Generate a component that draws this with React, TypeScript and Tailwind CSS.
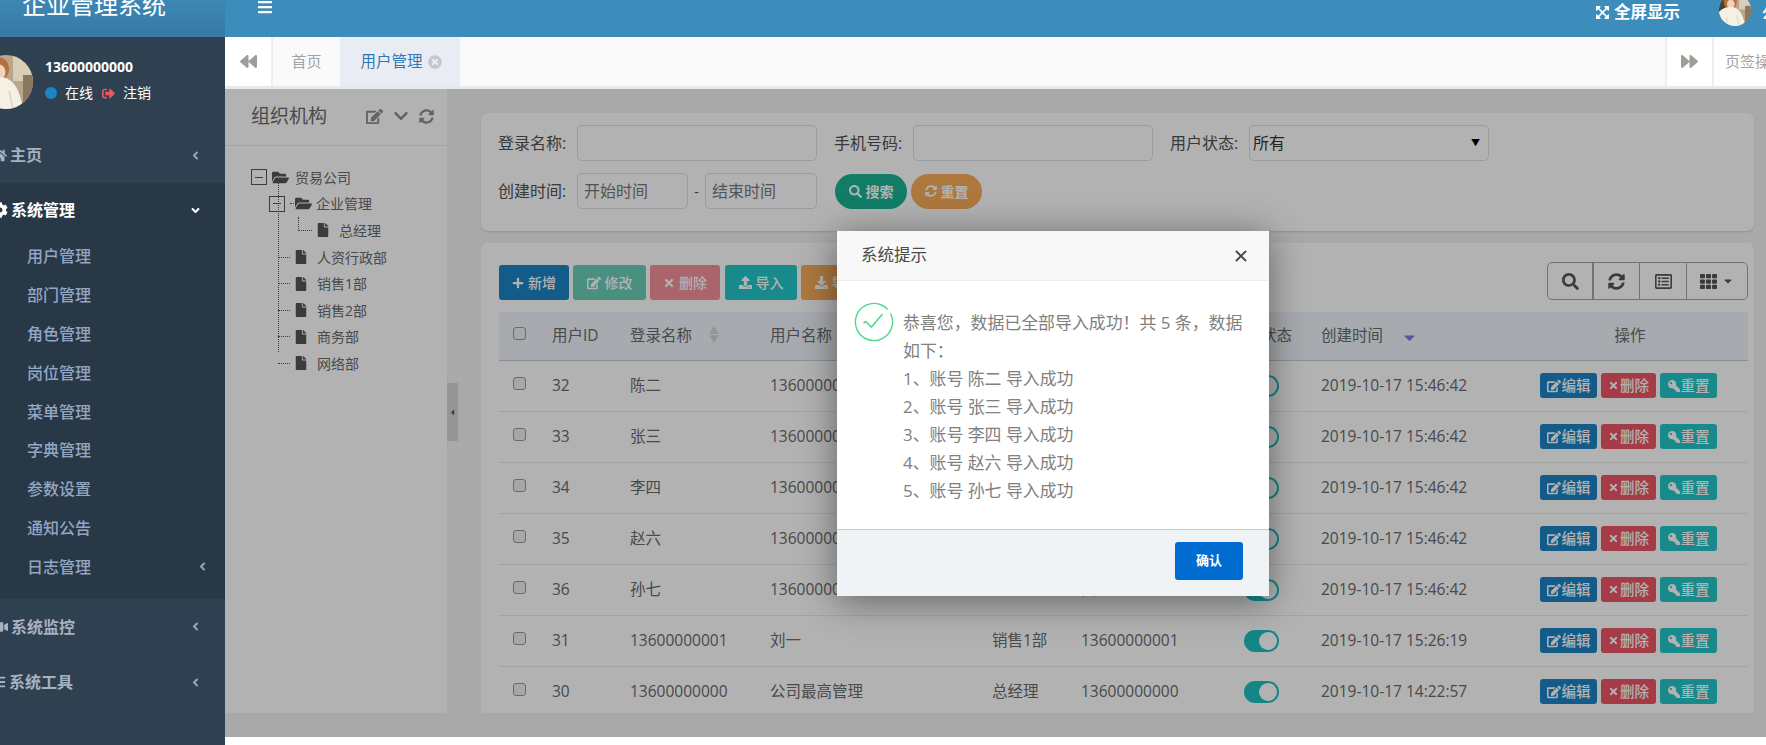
import {
  FaAngleDown,
  FaAngleLeft,
  FaBackward,
  FaBars,
  FaCaretDown,
  FaCaretLeft,
  FaChevronDown,
  FaCog,
  FaDownload,
  FaEdit,
  FaExpandArrowsAlt,
  FaFile,
  FaFolderOpen,
  FaForward,
  FaHome,
  FaKey,
  FaPlus,
  FaRegListAlt,
  FaSearch,
  FaSignOutAlt,
  FaSyncAlt,
  FaTh,
  FaTimes,
  FaTimesCircle,
  FaUpload,
  FaVideo,
} from 'react-icons/fa';

const subMenus = ['用户管理', '部门管理', '角色管理', '岗位管理', '菜单管理', '字典管理', '参数设置', '通知公告', '日志管理'];

const rows = [
  { id: 32, login: '陈二', name: '13600000002', dept: '', phone: '', time: '2019-10-17 15:46:42' },
  { id: 33, login: '张三', name: '13600000003', dept: '', phone: '', time: '2019-10-17 15:46:42' },
  { id: 34, login: '李四', name: '13600000004', dept: '', phone: '', time: '2019-10-17 15:46:42' },
  { id: 35, login: '赵六', name: '13600000005', dept: '', phone: '', time: '2019-10-17 15:46:42' },
  { id: 36, login: '孙七', name: '13600000006', dept: '', phone: '贝', time: '2019-10-17 15:46:42' },
  { id: 31, login: '13600000001', name: '刘一', dept: '销售1部', phone: '13600000001', time: '2019-10-17 15:26:19' },
  { id: 30, login: '13600000000', name: '公司最高管理', dept: '总经理', phone: '13600000000', time: '2019-10-17 14:22:57' },
];

const results = ['1、账号 陈二 导入成功', '2、账号 张三 导入成功', '3、账号 李四 导入成功', '4、账号 赵六 导入成功', '5、账号 孙七 导入成功'];

function Avatar({ size }: { size: string }) {
  return (
    <svg viewBox="0 0 54 54" className={`${size} shrink-0 rounded-full`}>
      <rect width="54" height="54" fill="#b9a68c" />
      <rect width="12" height="30" fill="#4e3d33" />
      <rect x="34" width="20" height="26" fill="#d9cdb6" />
      <rect x="44" y="20" width="10" height="34" fill="#8b765f" />
      <ellipse cx="19" cy="14" rx="11" ry="12" fill="#b2703f" />
      <ellipse cx="20" cy="17" rx="6.5" ry="7.5" fill="#f2d2bb" />
      <path d="M0 54V30c6-6 12-8 20-8 12 0 20 8 24 32z" fill="#f5f0e4" />
      <path d="M30 36l4 18M14 40l-2 14" stroke="#dcd3c0" strokeWidth="1.5" fill="none" />
    </svg>
  );
}

function MenuItem({ icon, label, active, offset }: { icon: React.ReactNode; label: string; active?: boolean; offset: string }) {
  return (
    <div className={`flex h-full items-center justify-between pr-[23px] text-[16px] font-semibold ${active ? 'text-white' : 'text-[#a7b1c2]'}`}>
      <span className={`flex items-center gap-[3px] ${offset}`}>
        {icon}
        {label}
      </span>
      {active ? <FaAngleDown className="text-[13px]" /> : <FaAngleLeft className="text-[13px] text-[#8ea4c4]" />}
    </div>
  );
}

function Sidebar() {
  return (
    <aside className="flex w-[225px] shrink-0 flex-col overflow-hidden bg-[#2f4050]">
      <div className="flex h-[37px] items-end overflow-hidden bg-linear-to-b from-[#3d87b5] to-[#367aa5] pl-[22px] pb-[16px] text-[24px] leading-[32px] text-white">
        <span className="whitespace-nowrap">企业管理系统</span>
      </div>
      <div className="flex h-[94px] items-center gap-[12px] -ml-[21px] pb-[8px]">
        <Avatar size="h-[54px] w-[54px] mt-[4px]" />
        <div>
          <div className="text-[14px] font-bold leading-[20px] text-white">13600000000</div>
          <div className="mt-[6px] flex items-center text-[14px] leading-[20px] text-white">
            <span className="mr-[8px] h-[12px] w-[12px] rounded-full bg-[#1c84c6]" />
            在线
            <FaSignOutAlt className="ml-[9px] mr-[8px] text-[13px] text-[#ed5565]" />
            注销
          </div>
        </div>
      </div>
      <div className="h-[52px] pb-[4px]">
        <MenuItem icon={<FaHome className="text-[15px]" />} label="主页" offset="-ml-[8px]" />
      </div>
      <div className="h-[416px] bg-[#293846]">
        <div className="h-[54px]">
          <MenuItem icon={<FaCog className="text-[16px]" />} label="系统管理" active offset="-ml-[8px]" />
        </div>
        {subMenus.map((m, i) => (
          <div key={m} className="flex h-[38.8px] items-center justify-between pl-[27px] pr-[16px] text-[16px] font-medium text-[#93a6c4]">
            {m}
            {i === 8 && <FaAngleLeft className="text-[13px] text-[#8ea4c4]" />}
          </div>
        ))}
      </div>
      <div className="h-[55px]">
        <MenuItem icon={<FaVideo className="text-[14px]" />} label="系统监控" offset="-ml-[6px]" />
      </div>
      <div className="h-[56px]">
        <MenuItem icon={<FaBars className="text-[14px]" />} label="系统工具" offset="-ml-[8px]" />
      </div>
    </aside>
  );
}

function TopBar() {
  return (
    <div className="flex h-[37px] shrink-0 items-start justify-between overflow-hidden bg-[#3c8dbc] text-white">
      <FaBars className="ml-[32px] mt-[-1px] text-[16px]" />
      <div className="flex items-start">
        <span className="mt-[2px] flex items-center gap-[4px] text-[16.5px] font-bold leading-[20px]">
          <FaExpandArrowsAlt className="text-[15px]" />
          全屏显示
        </span>
        <span className="ml-[39px] mt-[-6px]">
          <Avatar size="h-[32px] w-[32px]" />
        </span>
        <span className="ml-[11px] w-[4px] overflow-hidden whitespace-nowrap text-[14px] font-bold leading-[20px] mt-[3px]">公司</span>
      </div>
    </div>
  );
}

function TabBar() {
  return (
    <div className="flex h-[52px] shrink-0 border-b-[3px] border-[#e7eaec] bg-[#fafafa] text-[15px]">
      <div className="flex w-[48px] items-center justify-center border-r-2 border-[#eceef1] bg-white text-[17px] text-[#a09c98]">
        <FaBackward />
      </div>
      <div className="flex w-[67px] items-center justify-center text-[#a3a3a3]">首页</div>
      <div className="flex w-[120px] items-center justify-center gap-[5px] bg-[#e9edf3] pl-[2px] text-[15.5px] text-[#2f78b7]">
        用户管理
        <FaTimesCircle className="text-[14px] text-[#c4c8cd]" />
      </div>
      <div className="flex-1" />
      <div className="flex w-[49px] items-center justify-center border-x-2 border-[#eceef1] bg-white text-[17px] text-[#a09c98]">
        <FaForward />
      </div>
      <div className="flex w-[52px] items-center overflow-hidden whitespace-nowrap bg-white pl-[11px] text-[#a3a3a3]">页签操作</div>
    </div>
  );
}

function TreeRow({ pl, kind, label, connector, dash }: { pl: string; kind: 'root' | 'branch' | 'leaf'; label: string; connector?: string; dash?: boolean }) {
  return (
    <div className={`flex h-[26.6px] items-center text-[14px] text-[#676a6c] ${pl}`}>
      {connector && <span className={`mr-[4px] block border-dotted border-[#555] ${connector}`} />}
      {kind !== 'leaf' && (
        <span className="mr-[5px] flex h-[16px] w-[16px] items-center justify-center border border-[#555]">
          <span className="h-[1px] w-[8px] bg-[#555]" />
        </span>
      )}
      {dash && <span className="mr-[1px] w-[4px] border-t border-dotted border-[#555]" />}
      {kind === 'leaf' ? <FaFile className="mr-[9px] text-[14px] text-[#555]" /> : <FaFolderOpen className={`text-[17px] text-[#555] ${dash ? 'mr-[4px]' : 'mr-[6px]'}`} />}
      {label}
    </div>
  );
}

function OrgPanel() {
  return (
    <div className="flex h-[624px] w-[222px] shrink-0 flex-col bg-white">
      <div className="flex h-[57px] shrink-0 items-center justify-between border-b border-[#e7eaec] pb-[2px] pl-[26px] pr-[13px] text-[#8c8f92]">
        <span className="text-[19px] text-[#676a6c]">组织机构</span>
        <span className="flex items-center gap-[10px] text-[16px]">
          <FaEdit className="text-[17px]" />
          <FaChevronDown />
          <FaSyncAlt className="text-[15px]" />
        </span>
      </div>
      <div className="relative mt-[18px]">
        <span className="absolute left-[53px] top-[16px] h-[172px] border-l border-dotted border-[#555]" />
        <TreeRow pl="pl-[26px]" kind="root" label="贸易公司" />
        <TreeRow pl="pl-[44px]" kind="branch" label="企业管理" dash />
        <TreeRow pl="pl-[73px]" kind="leaf" label="总经理" connector="h-[14px] w-[14px] border-l border-b -mt-[12px]" />
        {['人资行政部', '销售1部', '销售2部', '商务部', '网络部'].map((d) => (
          <TreeRow key={d} pl="pl-[53px]" kind="leaf" label={d} connector="w-[12px] border-t" />
        ))}
      </div>
    </div>
  );
}

function Field({ label, children }: { label: string; children: React.ReactNode }) {
  return (
    <div className="flex items-center">
      <label className="w-[79px] shrink-0 whitespace-nowrap text-[16px] text-[#4f5254]">{label}</label>
      {children}
    </div>
  );
}

const inputClass = 'h-[36px] rounded-[5px] border border-[#dcdfe2] bg-white px-[6px] text-[16px] text-[#555] outline-none placeholder:text-[#777]';

function SearchCard() {
  return (
    <div className="h-[118px] rounded-[7px] bg-white pl-[17px] pt-[12px] shadow-[0_1px_2px_rgba(0,0,0,0.15)]">
      <div className="flex gap-[17px]">
        <Field label="登录名称:">
          <input className={`${inputClass} w-[240px]`} />
        </Field>
        <Field label="手机号码:">
          <input className={`${inputClass} w-[240px]`} />
        </Field>
        <Field label="用户状态:">
          <div className="flex h-[36px] w-[240px] items-center justify-between rounded-[5px] border border-[#dcdfe2] bg-white pl-[3px] pr-[8px] text-[16px] text-[#333]">
            所有
            <span className="text-[9px] text-black">▼</span>
          </div>
        </Field>
      </div>
      <div className="mt-[12px] flex items-center">
        <Field label="创建时间:">
          <input className={`${inputClass} w-[111px]`} placeholder="开始时间" />
        </Field>
        <span className="w-[17px] text-center text-[14px] text-[#555]">-</span>
        <input className={`${inputClass} w-[112px]`} placeholder="结束时间" />
        <button className="ml-[18px] flex h-[35px] w-[72px] items-center justify-center gap-[4px] rounded-full bg-[#1ab394] text-[14px] font-semibold text-white">
          <FaSearch className="text-[13px]" />
          搜索
        </button>
        <button className="ml-[4px] flex h-[35px] w-[71px] items-center justify-center gap-[4px] rounded-full bg-[#f8ac59] text-[14px] font-semibold text-white">
          <FaSyncAlt className="text-[12px]" />
          重置
        </button>
      </div>
    </div>
  );
}

function ToolButton({ icon, label, color, width }: { icon: React.ReactNode; label: string; color: string; width: string }) {
  return (
    <button className={`flex h-[35px] items-center justify-center gap-[4px] rounded-[3px] text-[14px] font-medium text-white ${color} ${width}`}>
      {icon}
      {label}
    </button>
  );
}

function RowAction({ icon, label, color, width }: { icon: React.ReactNode; label: string; color: string; width: string }) {
  return (
    <span className={`flex h-[25px] items-center justify-center gap-[1px] rounded-[3px] text-[14.5px] font-medium text-white ${color} ${width}`}>
      {icon}
      {label}
    </span>
  );
}

function Checkbox() {
  return <span className="-mt-[5px] block h-[13px] w-[13px] rounded-[3px] border border-[#999] bg-[#efefef]" />;
}

function UserTable() {
  return (
    <table className="w-[1249px] table-fixed text-[15.5px] text-[#676a6c]">
      <colgroup>
        <col className="w-[43px]" />
        <col className="w-[78px]" />
        <col className="w-[140px]" />
        <col className="w-[222px]" />
        <col className="w-[89px]" />
        <col className="w-[163px]" />
        <col className="w-[77px]" />
        <col className="w-[219px]" />
        <col className="w-[218px]" />
      </colgroup>
      <thead>
        <tr className="h-[48px] border-b border-[#c9ccd0] bg-[#f0f4fa] text-left">
          <th className="pl-[14px] font-normal"><Checkbox /></th>
          <th className="pb-[1px] pl-[10px] font-normal">用户ID</th>
          <th className="pb-[1px] pl-[10px] font-normal">
            <span className="flex items-center gap-[17px]">
              登录名称
              <span className="flex flex-col text-[10px] leading-[9px] text-[#d5d5d5]"><span>▲</span><span>▼</span></span>
            </span>
          </th>
          <th className="pb-[1px] pl-[10px] font-normal">用户名称</th>
          <th className="pb-[1px] pl-[10px] font-normal">部门</th>
          <th className="pb-[1px] pl-[10px] font-normal">手机号码</th>
          <th className="pb-[1px] pl-[27px] font-normal">状态</th>
          <th className="pb-[1px] pl-[10px] font-normal">
            <span className="flex items-center gap-[18px]">
              创建时间
              <FaCaretDown className="mt-[5px] text-[17px] text-[#7f7fe8]" />
            </span>
          </th>
          <th className="pb-[1px] pr-[18px] text-center font-normal">操作</th>
        </tr>
      </thead>
      <tbody>
        {rows.map((r) => (
          <tr key={r.id} className="h-[51px] border-b border-[#e7eaec]">
            <td className="pl-[14px]"><Checkbox /></td>
            <td className="pl-[10px]">{r.id}</td>
            <td className="pl-[10px]">{r.login}</td>
            <td className="pl-[10px]">{r.name}</td>
            <td className="pl-[10px]">{r.dept}</td>
            <td className="pl-[10px]">{r.phone}</td>
            <td className="pl-[10px]">
              <span className="flex h-[22px] w-[35px] items-center justify-end rounded-full bg-[#1ec0c0] pr-[2px]">
                <span className="h-[18px] w-[18px] rounded-full bg-white" />
              </span>
            </td>
            <td className="pl-[10px] whitespace-nowrap">{r.time}</td>
            <td className="pl-[10px]">
              <span className="flex gap-[4px]">
                <RowAction icon={<FaEdit className="text-[14px]" />} label="编辑" color="bg-[#1c84c6]" width="w-[57px]" />
                <RowAction icon={<FaTimes className="text-[11px]" />} label="删除" color="bg-[#ed5565]" width="w-[55px]" />
                <RowAction icon={<FaKey className="-scale-x-100 text-[12px]" />} label="重置" color="bg-[#23c6c8]" width="w-[57px]" />
              </span>
            </td>
          </tr>
        ))}
      </tbody>
    </table>
  );
}

function TableCard() {
  return (
    <div className="mt-[12px] h-[470px] overflow-hidden rounded-t-[7px] bg-white pl-[18px] pt-[19px]">
      <div className="flex h-[50px] w-[1249px] items-start justify-between">
        <div className="mt-[3px] flex gap-[4px]">
          <ToolButton icon={<FaPlus className="text-[12px]" />} label="新增" color="bg-[#1c84c6]" width="w-[70px]" />
          <ToolButton icon={<FaEdit className="text-[14px]" />} label="修改" color="bg-[#1ab394]/65" width="w-[73px]" />
          <ToolButton icon={<FaTimes className="text-[12px]" />} label="删除" color="bg-[#ed5565]/65" width="w-[70px]" />
          <ToolButton icon={<FaUpload className="text-[13px]" />} label="导入" color="bg-[#23c6c8]" width="ml-[1px] w-[72px]" />
          <ToolButton icon={<FaDownload className="text-[13px]" />} label="导出" color="bg-[#f8ac59]" width="w-[72px]" />
        </div>
        <div className="flex h-[38px] rounded-[5px] border border-[#a5a5a5] text-[17px] text-[#555]">
          <span className="flex w-[46px] items-center justify-center border-r-2 border-[#a5a5a5]"><FaSearch /></span>
          <span className="flex w-[46px] items-center justify-center border-r border-[#a5a5a5]"><FaSyncAlt /></span>
          <span className="flex w-[47px] items-center justify-center border-r border-[#a5a5a5]"><FaRegListAlt /></span>
          <span className="flex w-[60px] items-center justify-center gap-[5px]"><FaTh /><FaCaretDown className="text-[12px]" /></span>
        </div>
      </div>
      <UserTable />
    </div>
  );
}

function CheckIcon() {
  return (
    <svg viewBox="0 0 40 40" className="h-[40px] w-[40px] shrink-0" fill="none" stroke="#4fd890" strokeWidth="1.4">
      <circle cx="20" cy="20" r="18.6" strokeDasharray="96 5 16" transform="rotate(20 20 20)" />
      <path d="M9.5 21l2.2-1.5 5.8 5.5L28.5 12" strokeWidth="1.6" />
    </svg>
  );
}

function ImportDialog() {
  return (
    <div className="absolute left-[612px] top-[142px] flex h-[365px] w-[432px] flex-col bg-white shadow-[0_5px_35px_rgba(0,0,0,0.45)]">
      <div className="flex h-[50px] shrink-0 items-center justify-between border-b border-[#eee] bg-[#f8f8f8] pl-[24px] pr-[22px] text-[16.5px] text-[#4a4a4a]">
        系统提示
        <svg viewBox="0 0 12 12" className="h-[12px] w-[12px]" stroke="#3f4550" strokeWidth="1.8" fill="none">
          <path d="M1 1l10 10M11 1L1 11" />
        </svg>
      </div>
      <div className="flex flex-1 pl-[17px] pt-[21px]">
        <CheckIcon />
        <div className="ml-[9px] pt-[7px] whitespace-nowrap text-[16.9px] leading-[28px] text-[#808080]">
          <div>恭喜您，数据已全部导入成功！共 5 条，数据</div>
          <div>如下：</div>
          {results.map((t) => (
            <div key={t}>{t}</div>
          ))}
        </div>
      </div>
      <div className="flex h-[67px] shrink-0 items-center justify-end border-t border-[#c8c8c8] bg-[#eff3f6] pb-[5px] pr-[26px]">
        <button className="h-[38px] w-[68px] rounded-[3px] bg-[#006bd1] text-[13px] font-bold text-white">确认</button>
      </div>
    </div>
  );
}

export default function App() {
  return (
    <div className="flex h-[745px] w-[1766px] overflow-hidden bg-white font-['Open_Sans','Noto_Sans_CJK_SC',sans-serif]">
      <Sidebar />
      <div className="flex min-w-0 flex-1 flex-col">
        <TopBar />
        <TabBar />
        <div className="relative flex h-[648px] shrink-0 bg-[#f3f3f4]">
          <OrgPanel />
          <div className="relative w-[34px] shrink-0">
            <span className="absolute left-0 top-[294px] flex h-[58px] w-[11px] items-center justify-center bg-[#d6d6d6] text-[9px] text-[#555]">
              <FaCaretLeft />
            </span>
          </div>
          <div className="w-[1273px] shrink-0 pt-[24px]">
            <SearchCard />
            <TableCard />
          </div>
          <div className="absolute inset-0 bg-black/30" />
          <ImportDialog />
        </div>
        <div className="flex-1 bg-white" />
      </div>
    </div>
  );
}
